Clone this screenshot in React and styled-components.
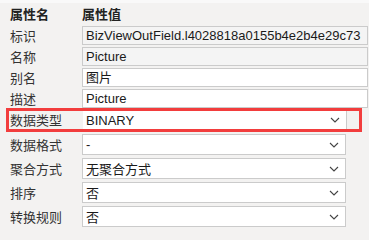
import styled, { createGlobalStyle } from 'styled-components';

const Global = createGlobalStyle`
  html, body { margin: 0; padding: 0; background: #f3f2f1; }
  body {
    font-family: "Liberation Sans", "Noto Sans CJK SC", sans-serif;
    font-size: 13px;
    color: #222;
    overflow: hidden;
  }
`;

const fields = [
  { label: '标识', value: 'BizViewOutField.l4028818a0155b4e2b4e29c73', type: 'text', readOnly: true },
  { label: '名称', value: 'Picture', type: 'text', readOnly: true },
  { label: '别名', value: '图片', type: 'text' },
  { label: '描述', value: 'Picture', type: 'text' },
  { label: '数据类型', value: 'BINARY', type: 'select', marked: true },
  { label: '数据格式', value: '-', type: 'select' },
  { label: '聚合方式', value: '无聚合方式', type: 'select' },
  { label: '排序', value: '否', type: 'select' },
  { label: '转换规则', value: '否', type: 'select' },
];

function Chevron() {
  return (
    <svg width="10" height="6" viewBox="0 0 10 6">
      <polyline points="1,1 5,5 9,1" fill="none" stroke="#444" strokeWidth="1.1" />
    </svg>
  );
}

function App() {
  return (
    <>
      <Global />
      <S.Panel>
        <S.TopStrip />
        <S.Header>
          <S.HeadCell>属性名</S.HeadCell>
          <S.HeadCell>属性值</S.HeadCell>
        </S.Header>
        {fields.map((f) => (
          f.type === 'text' ? (
            <S.TextRow key={f.label}>
              <S.Label>{f.label}</S.Label>
              <S.Input $readOnly={f.readOnly}>{f.value}</S.Input>
            </S.TextRow>
          ) : (
            <S.SelectRow key={f.label} $marked={f.marked}>
              <S.Label>{f.label}</S.Label>
              <S.Select $marked={f.marked}>
                <span>{f.value}</span>
                <Chevron />
              </S.Select>
            </S.SelectRow>
          )
        ))}
      </S.Panel>
    </>
  );
}

export default App;

const S = {};

S.Panel = styled.div`
  width: 369px;
  height: 240px;
  overflow: hidden;
  display: flex;
  flex-direction: column;
`;

S.TopStrip = styled.div`
  height: 3px;
  background: #f9f9f9;
`;

S.Header = styled.div`
  height: 22px;
  display: grid;
  grid-template-columns: 72px 1fr;
  align-items: center;
  padding-left: 10px;
`;

S.HeadCell = styled.div`
  font-weight: bold;
  font-family: "Noto Sans CJK SC", sans-serif;
  font-size: 13px;
  line-height: 16px;
`;

S.TextRow = styled.div`
  height: 21px;
  display: grid;
  grid-template-columns: 72px 286px;
  align-items: center;
  padding-left: 10px;
`;

S.SelectRow = styled.div`
  height: 24px;
  display: grid;
  grid-template-columns: 72px 264px;
  align-items: center;
  padding: 2px 0 1px 10px;
  box-sizing: border-box;
  ${props => props.$marked ? `
    margin: -1px 0 0 6px;
    width: 356px;
    padding: 0 0 0 1px;
    grid-template-columns: 73px 264px;
    border: 3px solid #f23d3d;
  ` : ''}
`;

S.Label = styled.div`
  font-family: "Noto Sans CJK SC", sans-serif;
  font-size: 13px;
  line-height: 16px;
  color: #333;
`;

S.Input = styled.div`
  height: 19px;
  box-sizing: border-box;
  border: 1px solid #cbcbcb;
  background: ${props => props.$readOnly ? '#f4f4f4' : '#fff'};
  padding: 0 3px;
  line-height: 17px;
  white-space: nowrap;
  overflow: hidden;
  font-size: 13px;
  color: #1a1a1a;
`;

S.Select = styled.div`
  height: ${props => props.$marked ? 18 : 21}px;
  box-sizing: border-box;
  border: 1px solid #cbcbcb;
  ${props => props.$marked ? 'border-top: none; border-bottom: none; border-left: none;' : ''}
  background: #fff;
  display: flex;
  align-items: center;
  justify-content: space-between;
  padding: 0 6px 0 3px;
  font-size: 13px;
  color: #1a1a1a;
`;
